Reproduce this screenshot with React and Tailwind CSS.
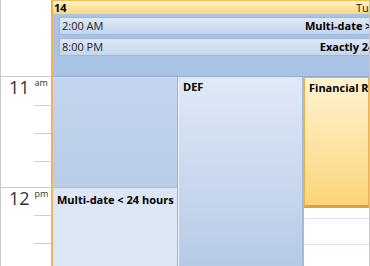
import React from "react";

export default function App() {
  const font = { fontFamily: '"Open Sans", "Noto Sans", sans-serif' };
  return (
    <div className="w-[370px] h-[266px] overflow-hidden flex bg-white border-l border-[#c8c8c8]" style={font}>
      {/* time ruler */}
      <div className="w-[50px] flex flex-col shrink-0">
        <div className="h-[77px] border-b border-[#c9c9c9] shrink-0"></div>
        <div className="h-[111px] border-b border-[#c9c9c9] shrink-0 flex flex-col">
          <div className="h-[28px] flex items-start pl-[8px] pt-[1px] text-[#333]">
            <span className="text-[18px] leading-[18px]">11</span>
            <span className="text-[9px] leading-[10px] ml-[5px]">am</span>
          </div>
          <div className="h-[28px] border-t border-[#cfcfcf] ml-[33px]"></div>
          <div className="h-[28px] border-t border-[#cfcfcf] ml-[33px]"></div>
          <div className="flex-1 border-t border-[#cfcfcf] ml-[33px]"></div>
        </div>
        <div className="flex-1 flex flex-col">
          <div className="h-[27px] flex items-start pl-[8px] pt-[1px] text-[#333]">
            <span className="text-[18px] leading-[18px]">12</span>
            <span className="text-[9px] leading-[10px] ml-[5px]">pm</span>
          </div>
          <div className="h-[28px] border-t border-[#cfcfcf] ml-[33px]"></div>
          <div className="flex-1 border-t border-[#cfcfcf] ml-[33px]"></div>
        </div>
      </div>
      {/* orange day line */}
      <div className="w-[2px] bg-[#f2b25c] shrink-0"></div>
      {/* day area */}
      <div className="flex-1 flex flex-col min-w-0">
        <div className="h-[14px] shrink-0 flex items-center justify-between bg-gradient-to-b from-[#fff2c4] to-[#fcd67c] border-t border-[#f1c05c] text-[11px] leading-none">
          <span className="font-bold text-black pl-[1px]">14</span>
          <span className="text-[#222] whitespace-nowrap -mr-[6px]">Tue</span>
        </div>
        <div className="h-[63px] shrink-0 bg-[#a9c3e4] pt-[3px] pl-[6px] flex flex-col gap-[3px] border-b border-[#8fadd8]">
          <div className="h-[18px] flex items-center justify-between bg-gradient-to-b from-[#dfe8f5] to-[#c4d5ec] border border-[#9db7de] border-r-0 pl-[2px] text-[11px] whitespace-nowrap overflow-hidden">
            <span className="text-[#222]">2:00 AM</span>
            <span className="font-bold text-black -mr-[18px]">Multi-date &gt; 24</span>
          </div>
          <div className="h-[18px] flex items-center justify-between bg-gradient-to-b from-[#dfe8f5] to-[#c4d5ec] border border-[#9db7de] border-r-0 pl-[2px] text-[11px] whitespace-nowrap overflow-hidden">
            <span className="text-[#222]">8:00 PM</span>
            <span className="font-bold text-black -mr-[40px]">Exactly 24 hours</span>
          </div>
        </div>
        <div className="flex-1 flex min-h-0">
          <div className="w-[125px] shrink-0 flex flex-col border-r border-[#9bb5da]">
            <div className="h-[110px] shrink-0 bg-gradient-to-b from-[#c4d6ee] to-[#b8cce8] border-t border-[#d6e2f2]"></div>
            <div className="flex-1 bg-[#dce6f4] border-t border-[#a7bfe0] pl-[4px] pt-[4px] text-[11px] font-bold text-black whitespace-nowrap">
              Multi-date &lt; 24 hours
            </div>
          </div>
          <div className="w-[126px] shrink-0 bg-gradient-to-b from-[#e0e9f7] to-[#b6cae6] border-l border-[#eef3fa] border-r-2 border-r-[#9fbbe2] pl-[4px] pt-[2px] text-[11px] font-bold text-black">
            DEF
          </div>
          <div className="flex-1 flex flex-col min-w-0">
            <div className="h-[131px] shrink-0 bg-gradient-to-b from-[#fff4cf] to-[#fbd57a] border border-[#e8b04a] border-b-[3px] border-b-[#d9a33d] pl-[4px] pt-[2px] text-[11px] font-bold text-black whitespace-nowrap overflow-hidden">
              Financial Report
            </div>
            <div className="h-[10px] shrink-0"></div>
            <div className="h-[26px] shrink-0 border-t border-[#dbe6f5]"></div>
            <div className="flex-1 border-t border-[#dbe6f5]"></div>
          </div>
        </div>
      </div>
      <div className="w-[1px] bg-[#c8c8c8] shrink-0"></div>
    </div>
  );
}
